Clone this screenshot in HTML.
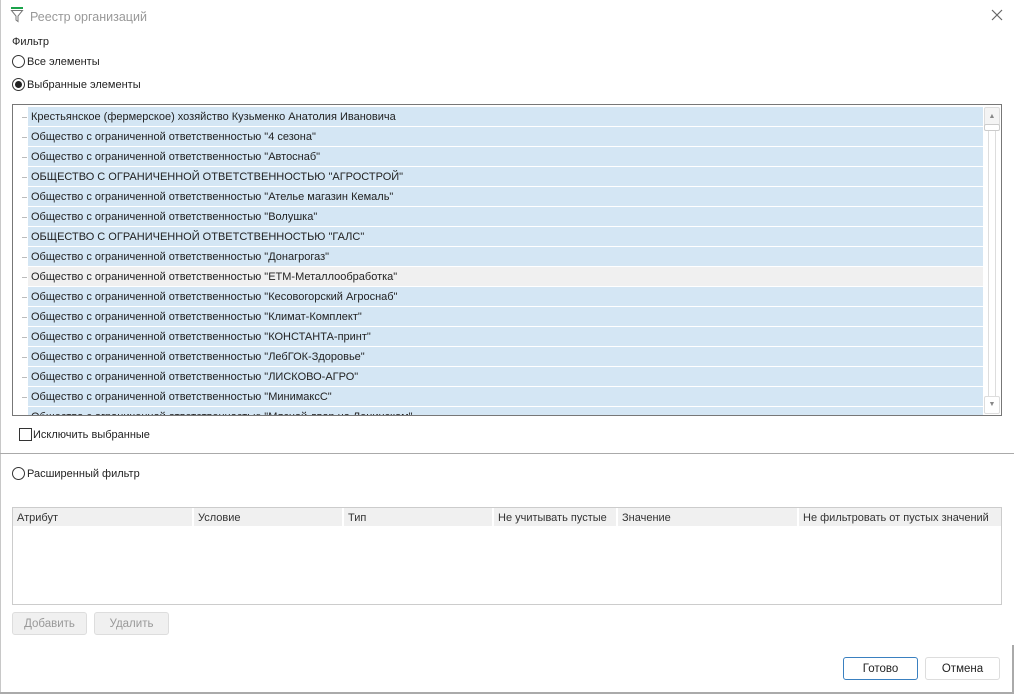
<!DOCTYPE html>
<html><head><meta charset="utf-8"><style>
*{box-sizing:border-box;margin:0;padding:0}
body{width:1014px;height:694px;background:#fff;font-family:"Liberation Sans",sans-serif;font-size:11px;color:#222;position:relative;overflow:hidden}
.a{position:absolute;white-space:nowrap}
.l{margin-top:1px}
.row{position:absolute;left:28px;width:955px;height:19px;background:#d4e6f4;line-height:21px;padding-left:3px;white-space:nowrap;overflow:hidden}
.dash{position:absolute;left:22px;width:5px;height:1px;background:#bbb}
.radio{position:absolute;width:13px;height:13px;border:1px solid #333;border-radius:50%;background:#fff}
.btn{position:absolute;border:1px solid #ddd;border-radius:3px;background:#f0f0f0;text-align:center;line-height:22px;color:#999;font-size:11.5px}
.th{position:absolute;top:508px;height:18px;line-height:20px;background:#f0f0f0;padding-left:4px;color:#333;white-space:nowrap;overflow:hidden}
</style></head><body>
<div class="a" style="left:0;top:0;width:1px;height:694px;background:#c8c8c8"></div>
<div class="a" style="left:0;top:692px;width:1014px;height:2px;background:#aaa"></div>
<div class="a" style="left:1012px;top:645px;width:2px;height:49px;background:#aaa"></div>
<svg class="a" style="left:10px;top:7px" width="14" height="16"><rect x="1" y="0" width="12" height="2" fill="#1aa34a"/><path d="M1.5 3.5 L12.5 3.5 L8 9 L8 14.5 L6 13 L6 9 Z" fill="none" stroke="#777" stroke-width="1"/></svg>
<div class="a" style="left:30px;top:10px;font-size:12.5px;color:#999">Реестр организаций</div>
<svg class="a" style="left:991px;top:9px" width="12" height="12"><path d="M1 1L11 11M11 1L1 11" stroke="#666" stroke-width="1.2"/></svg>
<div class="a" style="left:12px;top:36px">Фильтр</div>
<div class="radio" style="left:12px;top:55px"></div><div class="a" style="left:27px;top:56px">Все элементы</div>
<div class="radio" style="left:12px;top:78px"><div class="a" style="left:2px;top:2px;width:7px;height:7px;border-radius:50%;background:#222"></div></div><div class="a" style="left:27px;top:79px">Выбранные элементы</div>
<div class="a" style="left:12px;top:104px;width:990px;height:312px;border:1px solid #777;overflow:hidden">
<div id="rows"></div>
<div class="a" style="left:971px;top:2px;width:16px;height:19px;border:1px solid #ddd;border-radius:2px;background:#f4f4f4;color:#888;font-size:7px;text-align:center;line-height:17px">▲</div>
<div class="a" style="left:975px;top:25px;width:8px;height:268px;border:1px solid #ddd"></div>
<div class="a" style="left:971px;top:19px;width:16px;height:7px;border:1px solid #ccc;border-radius:2px;background:#fff"></div>
<div class="a" style="left:971px;top:291px;width:16px;height:18px;border:1px solid #ddd;border-radius:2px;background:#fff;color:#888;font-size:7px;text-align:center;line-height:16px">▼</div>
</div>
<div class="a" style="left:19px;top:428px;width:13px;height:13px;border:1px solid #333"></div><div class="a" style="left:33px;top:429px">Исключить выбранные</div>
<div class="a" style="left:0;top:453px;width:1014px;height:1px;background:#aaa"></div>
<div class="radio" style="left:12px;top:467px"></div><div class="a" style="left:27px;top:468px">Расширенный фильтр</div>
<div class="a" style="left:12px;top:507px;width:990px;height:98px;border:1px solid #ccc"></div>
<div class="th" style="left:13px;width:179px">Атрибут</div>
<div class="th" style="left:194px;width:148px">Условие</div>
<div class="th" style="left:344px;width:148px">Тип</div>
<div class="th" style="left:494px;width:122px">Не учитывать пустые</div>
<div class="th" style="left:618px;width:179px">Значение</div>
<div class="th" style="left:799px;width:202px">Не фильтровать от пустых значений</div>
<div class="btn" style="left:12px;top:612px;width:75px;height:23px">Добавить</div>
<div class="btn" style="left:94px;top:612px;width:75px;height:23px">Удалить</div>
<div class="btn" style="left:843px;top:657px;width:75px;height:23px;background:#fff;border-color:#3a80c0;color:#222">Готово</div>
<div class="btn" style="left:925px;top:657px;width:75px;height:23px;background:#fff;color:#222">Отмена</div>
<script>
var t=['Крестьянское (фермерское) хозяйство Кузьменко Анатолия Ивановича','Общество с ограниченной ответственностью "4 сезона"','Общество с ограниченной ответственностью "Автоснаб"','ОБЩЕСТВО С ОГРАНИЧЕННОЙ ОТВЕТСТВЕННОСТЬЮ "АГРОСТРОЙ"','Общество с ограниченной ответственностью "Ателье магазин Кемаль"','Общество с ограниченной ответственностью "Волушка"','ОБЩЕСТВО С ОГРАНИЧЕННОЙ ОТВЕТСТВЕННОСТЬЮ "ГАЛС"','Общество с ограниченной ответственностью "Донагрогаз"','Общество с ограниченной ответственностью "ЕТМ-Металлообработка"','Общество с ограниченной ответственностью "Кесовогорский Агроснаб"','Общество с ограниченной ответственностью "Климат-Комплект"','Общество с ограниченной ответственностью "КОНСТАНТА-принт"','Общество с ограниченной ответственностью "ЛебГОК-Здоровье"','Общество с ограниченной ответственностью "ЛИСКОВО-АГРО"','Общество с ограниченной ответственностью "МинимаксС"','Общество с ограниченной ответственностью "Мясной двор на Ленинском"'];
var h='';for(var i=0;i<t.length;i++){var y=2+i*20;h+='<div class="dash" style="left:9px;top:'+(y+10)+'px"></div><div class="row" style="left:15px;top:'+y+'px;'+(i==8?'background:#f0f0f0':'')+'">'+t[i]+'</div>';}
document.getElementById('rows').innerHTML=h;
</script>
</body></html>
